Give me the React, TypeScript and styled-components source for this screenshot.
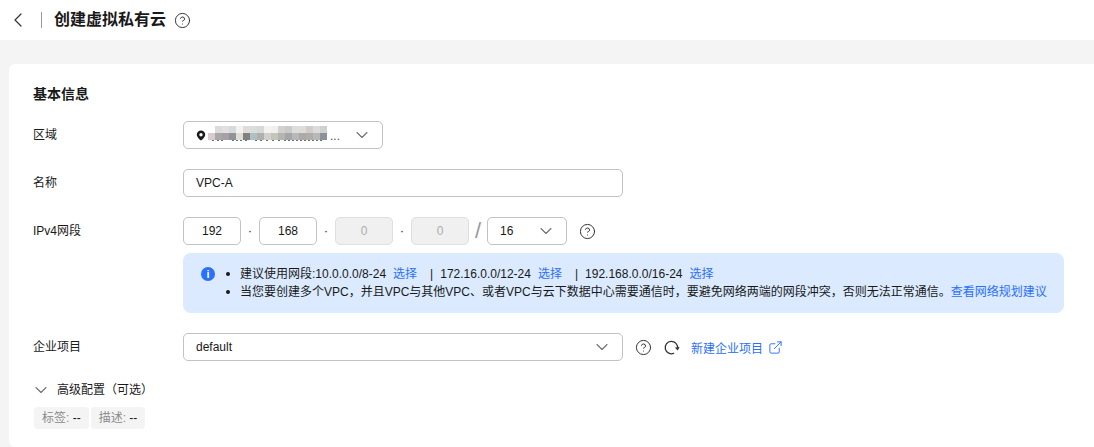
import React from "react";
import styled, { createGlobalStyle } from "styled-components";
import { LuChevronDown, LuChevronLeft, LuCircleHelp, LuExternalLink } from "react-icons/lu";

const GlobalStyle = createGlobalStyle`
  html, body { margin: 0; padding: 0; background: #f4f4f4; }
  body {
    font-family: "Liberation Sans", "Noto Sans CJK SC", sans-serif;
    font-size: 12px;
    color: #191919;
    overflow: hidden;
  }
`;

const MOSAIC_TOP = ["#fff", "#dcdcdc", "#e0e0e0", "#d6dadb", "#f2f2f0", "#e0ddd8", "#d8dedd", "#d8d8d8", "#f2f2f0", "#f0f0ee", "#d6d0cd", "#c8cacc", "#e0dcdc", "#dcdcd8", "#d0cdca", "#dcdcdc", "#d0d0d0"];
const MOSAIC_BOTTOM = ["#d8ccd0", "#a8a8a8", "#a8a0a4", "#909498", "#e0ddd8", "#808280", "#b0c0c0", "#b0b0b0", "#d0d0cc", "#c4c4bc", "#b4b4b0", "#a4a6a8", "#b8b8b8", "#acaaa8", "#b0aeaa", "#b8b8b8", "#8c9298"];
const MOSAIC_SPECKS = [4, 9, 13, 24, 28, 32, 37, 47, 52, 58, 64, 70, 76, 80, 84, 88, 92, 96, 100, 104, 108, 112];

const Header = styled.header`
  height: 40px;
  background: #fff;
  display: flex;
  align-items: center;
  padding-left: 6px;
`;
const BackIcon = styled(LuChevronLeft)`
  font-size: 24px;
  color: #333;
  stroke-width: 1.2;
  flex: none;
`;
const HeaderRule = styled.span`
  width: 1px;
  height: 16px;
  background: #999;
  margin: 0 12px 0 11px;
`;
const PageTitle = styled.h1`
  margin: 0 8px 0 0;
  font-size: 16px;
  font-weight: 700;
  line-height: 22px;
`;
const HelpIcon = styled(LuCircleHelp)`
  font-size: 17px;
  color: #333;
  stroke-width: 1.4;
  flex: none;
`;
const Card = styled.main`
  margin: 24px 0 0 9px;
  padding: 20px 30px 0 24px;
  height: 383px;
  box-sizing: border-box;
  background: #fff;
  border-radius: 6px 0 0 6px;
`;
const SectionTitle = styled.h2`
  margin: 0 0 17px;
  font-size: 14px;
  font-weight: 700;
  line-height: 20px;
`;
const Row = styled.div<{ $bottom: number }>`
  display: grid;
  grid-template-columns: 150px 1fr;
  align-items: start;
  margin-bottom: ${(p) => p.$bottom}px;
`;
const Label = styled.label`
  line-height: 28px;
`;
const Field = styled.div`
  display: flex;
  align-items: center;
  min-width: 0;
`;
const Box = styled.div<{ $width: number; $disabled?: boolean }>`
  width: ${(p) => p.$width}px;
  height: 28px;
  box-sizing: border-box;
  border: 1px solid ${(p) => (p.$disabled ? "#dfdfdf" : "#c2c2c2")};
  border-radius: 5px;
  background: ${(p) => (p.$disabled ? "#f0f0f0" : "#fff")};
  color: ${(p) => (p.$disabled ? "#adadad" : "#191919")};
  display: flex;
  align-items: center;
  flex: none;
`;
const SelectBox = styled(Box)`
  padding: 0 10px 0 12px;
  justify-content: space-between;
`;
const TextBox = styled(Box)`
  padding-left: 12px;
`;
const Octet = styled(Box)`
  justify-content: center;
`;
const Dot = styled.span`
  width: 18px;
  text-align: center;
  color: #222;
`;
const Slash = styled.span`
  width: 18px;
  text-align: center;
  color: #999;
  font-size: 22px;
  line-height: 28px;
`;
const Chevron = styled(LuChevronDown)`
  font-size: 20px;
  color: #707070;
  stroke-width: 1.3;
  flex: none;
`;
const RegionValue = styled.span`
  display: flex;
  align-items: center;
  gap: 2px;
`;
const Mosaic = styled.svg`
  display: block;
  margin-bottom: 2px;
`;
const Ellipsis = styled.span`
  color: #555;
  line-height: 14px;
  margin: 2px 0 0 1px;
`;
const FieldHelp = styled(HelpIcon)`
  margin-left: 12px;
`;
const Notice = styled.div`
  height: 60px;
  box-sizing: border-box;
  margin: -12px 0 20px 150px;
  padding: 0 0 0 18px;
  display: flex;
  align-items: center;
  background: #dbeafe;
  border-radius: 8px;
`;
const InfoBadge = styled.span`
  width: 14px;
  height: 14px;
  flex: none;
  border-radius: 50%;
  background: #2a6fff;
  color: #fff;
  font-size: 11px;
  font-weight: 700;
  line-height: 14px;
  text-align: center;
  margin: -18px 9px 0 0;
`;
const NoticeList = styled.ul`
  margin: 0;
  padding: 0;
  list-style: none;
`;
const NoticeItem = styled.li`
  line-height: 18px;
  white-space: nowrap;
  &::before {
    content: "";
    display: inline-block;
    width: 4px;
    height: 4px;
    margin: 0 10px 2px 2px;
    border-radius: 50%;
    background: #191919;
  }
`;
const TextLink = styled.a<{ $left?: number }>`
  color: #2a6fff;
  margin-left: ${(p) => p.$left ?? 0}px;
`;
const Pipe = styled.span`
  margin: 0 7px 0 13px;
`;
const RefreshIcon = styled.svg`
  width: 15px;
  height: 15px;
  margin-left: 12px;
  flex: none;
  overflow: visible;
`;
const ExternalIcon = styled(LuExternalLink)`
  font-size: 15px;
  color: #2a6fff;
  stroke-width: 1.5;
  margin-left: 5px;
  flex: none;
`;
const Advanced = styled.div`
  display: flex;
  align-items: center;
  gap: 6px;
  line-height: 18px;
  margin: 19px 0 7px;
`;
const AdvancedChevron = styled(Chevron)`
  margin-left: -2px;
`;
const Tags = styled.div`
  display: flex;
  gap: 2px;
  margin-left: 1px;
`;
const Tag = styled.span`
  height: 22px;
  padding: 0 8px;
  border-radius: 4px;
  background: #f4f4f4;
  color: #191919;
  line-height: 22px;
  & > em {
    font-style: normal;
    color: #8a8a8a;
  }
`;

export default function App() {
  return (
    <>
      <GlobalStyle />
      <Header>
        <BackIcon />
        <HeaderRule />
        <PageTitle>创建虚拟私有云</PageTitle>
        <HelpIcon />
      </Header>
      <Card>
        <SectionTitle>基本信息</SectionTitle>
        <Row $bottom={20}>
          <Label>区域</Label>
          <Field>
            <SelectBox $width={200}>
              <RegionValue>
                <svg width="10" height="11" viewBox="0 0 10 11">
                  <path d="M5 .5A4.2 4.2 0 0 0 .8 4.7C.8 7.4 5 10.6 5 10.6S9.2 7.4 9.2 4.7A4.2 4.2 0 0 0 5 .5Zm0 5.9a1.7 1.7 0 1 1 0-3.4 1.7 1.7 0 0 1 0 3.4Z" fill="#191919" />
                </svg>
                <Mosaic width="119" height="16" viewBox="0 0 119 16">
                  {MOSAIC_TOP.map((c, i) => (
                    <rect key={i} x={i * 7} y="0" width="7" height="7" fill={c} />
                  ))}
                  {MOSAIC_BOTTOM.map((c, i) => (
                    <rect key={i} x={i * 7} y="7" width="7" height="7" fill={c} />
                  ))}
                  {MOSAIC_SPECKS.map((x) => (
                    <rect key={x} x={x} y="14" width="2" height="1" fill="#6a7078" />
                  ))}
                </Mosaic>
                <Ellipsis>...</Ellipsis>
              </RegionValue>
              <Chevron />
            </SelectBox>
          </Field>
        </Row>
        <Row $bottom={20}>
          <Label>名称</Label>
          <Field>
            <TextBox $width={440}>VPC-A</TextBox>
          </Field>
        </Row>
        <Row $bottom={20}>
          <Label>IPv4网段</Label>
          <Field>
            <Octet $width={58}>192</Octet>
            <Dot>·</Dot>
            <Octet $width={58}>168</Octet>
            <Dot>·</Dot>
            <Octet $width={58} $disabled>0</Octet>
            <Dot>·</Dot>
            <Octet $width={58} $disabled>0</Octet>
            <Slash>/</Slash>
            <SelectBox $width={80}>
              16
              <Chevron />
            </SelectBox>
            <FieldHelp />
          </Field>
        </Row>
        <Notice>
          <InfoBadge>i</InfoBadge>
          <NoticeList>
            <NoticeItem>
              建议使用网段:10.0.0.0/8-24<TextLink $left={7}>选择</TextLink>
              <Pipe>|</Pipe>172.16.0.0/12-24<TextLink $left={7}>选择</TextLink>
              <Pipe>|</Pipe>192.168.0.0/16-24<TextLink $left={7}>选择</TextLink>
            </NoticeItem>
            <NoticeItem>
              当您要创建多个VPC，并且VPC与其他VPC、或者VPC与云下数据中心需要通信时，要避免网络两端的网段冲突，否则无法正常通信。
              <TextLink>查看网络规划建议</TextLink>
            </NoticeItem>
          </NoticeList>
        </Notice>
        <Row $bottom={0}>
          <Label>企业项目</Label>
          <Field>
            <SelectBox $width={440}>
              default
              <Chevron />
            </SelectBox>
            <FieldHelp />
            <RefreshIcon viewBox="0 0 15 15" fill="none" stroke="#333" strokeWidth="1.3">
              <path d="M10 13.2A6.2 6.2 0 1 1 13.5 8.5" />
              <path d="M11.6 7.4l1.9 2 1.5-2.2" />
            </RefreshIcon>
            <TextLink $left={12}>新建企业项目</TextLink>
            <ExternalIcon />
          </Field>
        </Row>
        <Advanced>
          <AdvancedChevron />
          高级配置（可选）
        </Advanced>
        <Tags>
          <Tag><em>标签: </em>--</Tag>
          <Tag><em>描述: </em>--</Tag>
        </Tags>
      </Card>
    </>
  );
}
